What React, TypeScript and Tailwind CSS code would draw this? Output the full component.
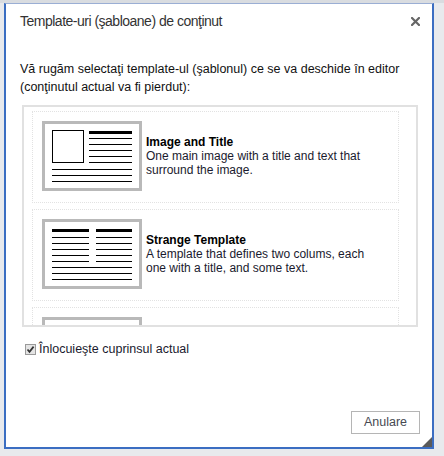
import React from "react";

const templates = [
  {
    title: "Image and Title",
    text: "One main image with a title and text that surround the image.",
    kind: "image",
  },
  {
    title: "Strange Template",
    text: "A template that defines two colums, each one with a title, and some text.",
    kind: "columns",
  },
  {
    title: "",
    text: "",
    kind: "table",
  },
];

function Thumb({ kind }: { kind: string }) {
  const thin = (y: number, x1: number, x2: number) => (
    <rect key={`${y}-${x1}`} x={x1} y={y} width={x2 - x1} height={1} fill="#000" />
  );
  return (
    <svg width="100" height="70" viewBox="0 0 100 70" className="shrink-0">
      <rect x="1.5" y="1.5" width="97" height="67" fill="#fff" stroke="#b9b9b9" strokeWidth="3" />
      {kind === "image" && (
        <>
          <rect x="10.5" y="9.5" width="31" height="32" fill="none" stroke="#000" />
          <rect x="47" y="10" width="43" height="3" fill="#000" />
          {[17, 23, 29, 35, 41].map((y) => thin(y, 47, 90))}
          {[48, 54, 60].map((y) => thin(y, 10, 90))}
        </>
      )}
      {kind === "columns" && (
        <>
          <rect x="10" y="10" width="37" height="3" fill="#000" />
          <rect x="54" y="10" width="36" height="3" fill="#000" />
          {[18, 24, 30, 36, 42].map((y) => thin(y, 10, 47))}
          {[18, 24, 30, 36, 42].map((y) => thin(y, 54, 90))}
          {[48, 54, 60].map((y) => thin(y, 10, 90))}
        </>
      )}
      {kind === "table" && (
        <>
          <rect x="10" y="10" width="80" height="3" fill="#000" />
          {[18, 24].map((y) => thin(y, 10, 90))}
        </>
      )}
    </svg>
  );
}

export default function App() {
  return (
    <div className="w-[444px] h-[456px] bg-[#e8eaed] overflow-hidden font-[family-name:'Liberation_Sans',Arial,sans-serif]">
      <div className="h-[3px] bg-[#d9dce0]" />
      <div className="pl-[4px]">
        <div className="relative w-[430px] h-[446px] bg-white border-x-2 border-b-2 border-t border-[#3b6ec2] border-t-[#9aaed4] flex flex-col pl-[14px] pr-[12px]">
          {/* title */}
          <div className="pt-[9px] flex items-center justify-between">
            <span className="text-[14px] leading-[17px] tracking-[-0.5px] text-[#333]">
              Template-uri (şabloane) de conţinut
            </span>
            <svg width="9" height="9" viewBox="0 0 9 9">
              <path d="M1 1L8 8M8 1L1 8" stroke="#666" strokeWidth="2.2" strokeLinecap="square" />
            </svg>
          </div>

          <p className="mt-[30px] text-[12.5px] leading-[18px] text-[#111]">
            Vă rugăm selectaţi template-ul (şablonul) ce se va deschide în editor
            <br />
            (conţinutul actual va fi pierdut):
          </p>

          <div className="mt-[9px] ml-[2px] w-[396px] h-[222px] border-2 border-[#e1e1e1] overflow-hidden pl-[8px] pr-[17px] pt-[4px] flex flex-col gap-[6px]">
            {templates.map((t, i) => (
              <div
                key={i}
                className="shrink-0 h-[92px] border border-dotted border-[#e2e2e2] pl-[9px] pt-[9px]"
              >
                <div className="flex items-center gap-[4px] h-[70px]">
                  <Thumb kind={t.kind} />
                  {t.title && (
                    <div className="text-[12px] leading-[14px] text-[#1a1a2e] w-[220px]">
                      <div className="font-bold text-black">{t.title}</div>
                      <div>{t.text}</div>
                    </div>
                  )}
                </div>
              </div>
            ))}
          </div>

          <label className="mt-[14px] ml-[5px] flex items-center gap-[2px] h-[16px] text-[12.5px] leading-[16px] text-[#1a1a2e]">
            <span className="w-[11px] h-[11px] border border-[#9a9a9a] bg-[#e4e4e4] flex items-center justify-center">
              <svg width="9" height="9" viewBox="0 0 9 9">
                <path d="M1.5 4.5L3.5 6.8L7.6 1.6" fill="none" stroke="#333" strokeWidth="1.7" />
              </svg>
            </span>
            <span className="ml-[1px]">Înlocuieşte cuprinsul actual</span>
          </label>

          <div className="flex-1" />
          <div className="flex justify-end pb-[13px]">
            <button className="w-[69px] h-[23px] border border-[#b5b5b5] bg-white text-[12.5px] text-[#474a52]">
              Anulare
            </button>
          </div>

          <svg className="absolute right-0 bottom-0" width="10" height="10" viewBox="0 0 10 10">
            <path d="M10 0L10 10L0 10Z" fill="#5a5a5a" />
          </svg>
        </div>
      </div>
    </div>
  );
}
